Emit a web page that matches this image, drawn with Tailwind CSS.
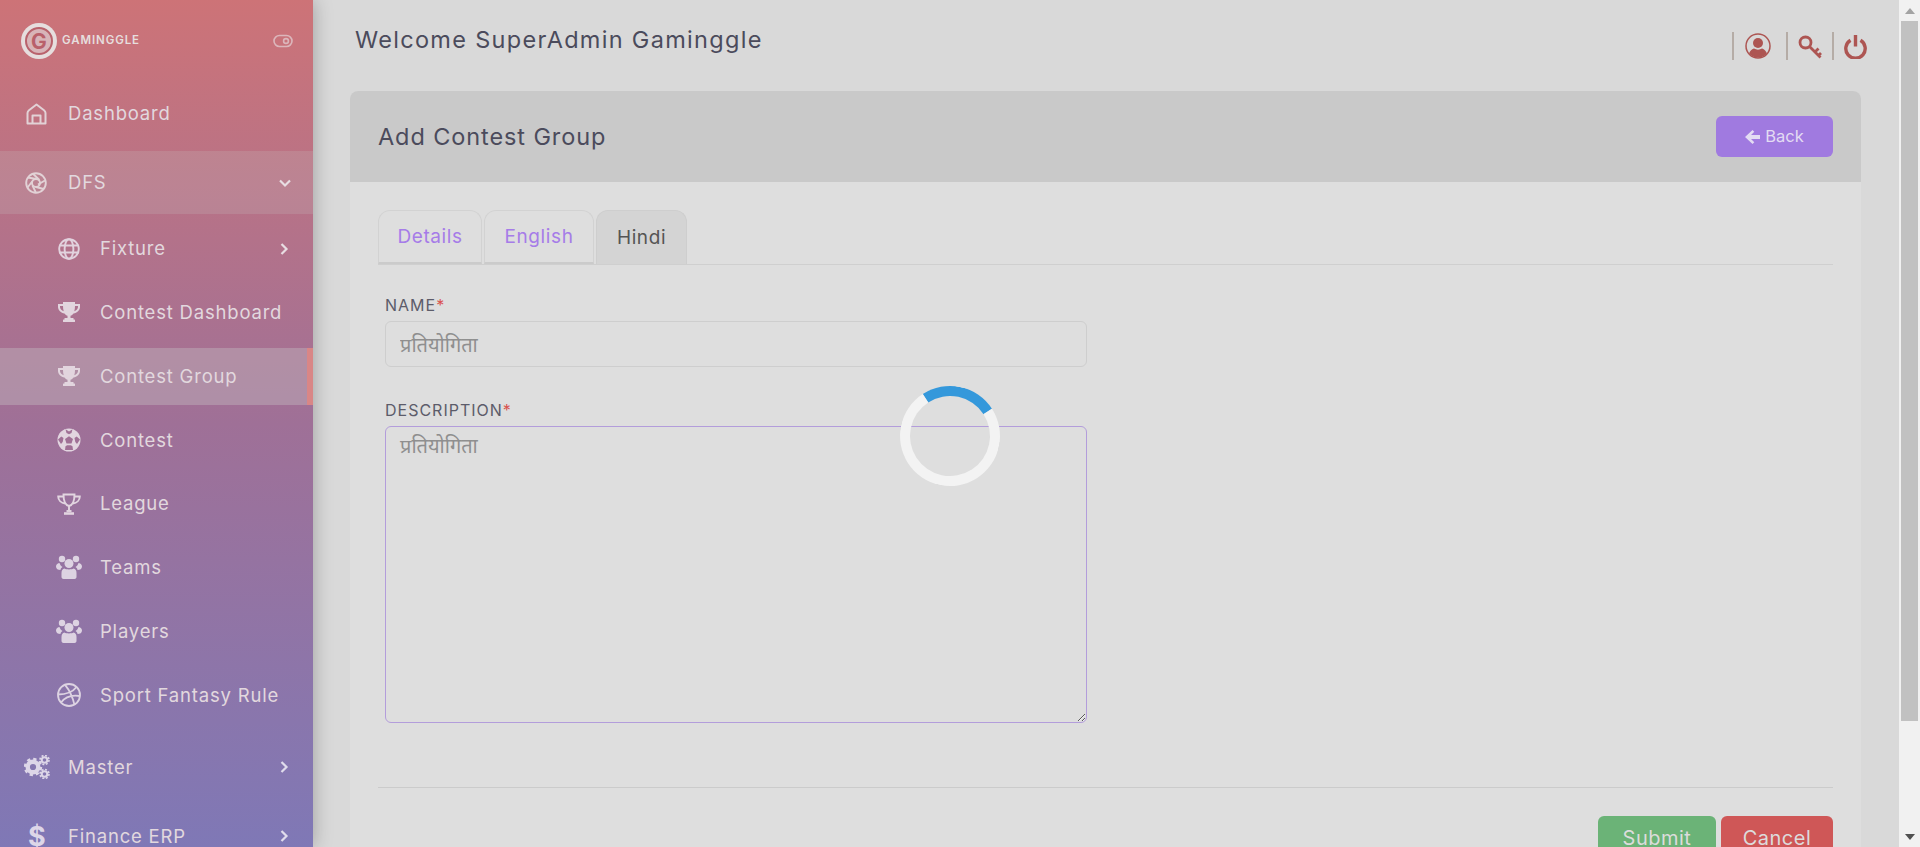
<!DOCTYPE html>
<html lang="en">
<head>
<meta charset="utf-8">
<title>Add Contest Group</title>
<script src="https://cdn.jsdelivr.net/npm/@tailwindcss/browser@4"></script>
</head>
<body class="h-screen overflow-hidden flex bg-[#d9d9d9] font-['Inter','Noto_Sans',sans-serif] relative">

<aside class="w-[313px] h-[847px] shrink-0 overflow-hidden relative z-10 shadow-[0_0_18px_rgba(0,0,0,0.28)] bg-gradient-to-b from-[#cd7377] via-[#9f7097] to-[#7f78b6] text-[#e2d8de] text-[18.5px] tracking-[0.8px] [&_a>span:nth-child(2)]:pt-[1px]">
  <div class="h-[82px] flex items-center pl-[21px] pr-[20px] justify-between">
    <div class="flex items-center">
      <div class="relative w-[36px] h-[36px] rounded-full bg-[#e6dede] flex items-center justify-center">
        <div class="w-[28px] h-[28px] rounded-full border-2 border-[#b9626c] bg-[#d8b4b8] flex items-center justify-center text-[#b9606a] text-[21px] font-bold leading-none tracking-normal">G</div>
      </div>
      <span class="ml-[5px] text-[11.5px] font-semibold tracking-[0.9px] text-[#e6dede] leading-none">GAMINGGLE</span>
    </div>
    <svg width="20" height="14" viewBox="0 0 20 14" fill="none" stroke="#dcb6bb" stroke-width="1.6"><rect x="1" y="1.5" width="18" height="11" rx="5.5"/><circle cx="13" cy="7" r="2.4"/></svg>
  </div>

  <div class="flex flex-col gap-[6px]">
    <a class="h-[63px] flex items-center">
      <span class="w-[68px] pl-[26px] shrink-0"><svg width="21" height="22" viewBox="0 0 21 22" fill="none" stroke="#e2d2d6" stroke-width="2" stroke-linejoin="round"><path d="M1.500 10C1.500 8.500 2 8 3 7.200L10.500 1.500 18 7.200C19 8 19.500 8.500 19.500 10V20.500H1.500z"/><path d="M6.500 20.500V12.500h8v8"/></svg></span>
      <span>Dashboard</span>
    </a>
    <a class="h-[63px] flex items-center bg-[#c8c8c8]/20">
      <span class="w-[68px] pl-[25px] shrink-0"><svg width="22" height="22" viewBox="0 0 22 22" fill="none" stroke="#e2d2d6" stroke-width="1.9"><circle cx="11" cy="11" r="9.8"/><circle cx="11" cy="11" r="4"/><path d="M8 1.700 14.400 8M20 8.500 13 12.500M18.500 17 11 15M11 20.800 7.500 13.500M2.500 15.500 7.200 9.500M3 5.500 11 7"/></svg></span>
      <span>DFS</span>
      <svg class="ml-auto mr-[21px]" width="14" height="10" viewBox="0 0 14 10" fill="none" stroke="#e8dde2" stroke-width="2.2"><path d="M2 2.500 7 7.500l5-5"/></svg>
    </a>
  </div>

  <div class="mt-[6px] flex flex-col gap-[6.8px]">
    <a class="h-[57px] flex items-center">
      <span class="w-[100px] pl-[58px] shrink-0"><svg width="22" height="22" viewBox="0 0 22 22" fill="none" stroke="#e2d2de" stroke-width="1.9"><circle cx="11" cy="11" r="9.8"/><ellipse cx="11" cy="11" rx="4.4" ry="9.8"/><path d="M1.500 7.500h19M1.500 14.500h19"/></svg></span>
      <span>Fixture</span>
      <svg class="ml-auto mr-[24px]" width="10" height="14" viewBox="0 0 10 14" fill="none" stroke="#e8dde2" stroke-width="2.2"><path d="M2.500 2 7.500 7l-5 5"/></svg>
    </a>
    <a class="h-[57px] flex items-center">
      <span class="w-[100px] pl-[58px] shrink-0"><svg width="22" height="20" viewBox="0 0 22 20" fill="#e2d5de"><path d="M5 0h12v2h5v3c0 3-3 6-6.500 6.500-.8 1.300-2 2-3 2.300V16h3v2H6.500v-2h3v-2.200c-1-.3-2.200-1-3-2.300C3 11 0 8 0 5V2h5zM2 4v1c0 1.700 1.500 3.500 3.700 4.200C5.200 7.600 5 6 5 4zm18 0h-3c0 2-.2 3.600-.7 5.200C18.500 8.500 20 6.700 20 5z"/><rect x="5" y="17.500" width="12" height="2.500" rx=".5"/></svg></span>
      <span>Contest Dashboard</span>
    </a>
    <a class="h-[57px] flex items-center bg-[#c8c8c8]/35 border-r-[6px] border-[#d98686]">
      <span class="w-[100px] pl-[58px] shrink-0"><svg width="22" height="20" viewBox="0 0 22 20" fill="#e2d5de"><path d="M5 0h12v2h5v3c0 3-3 6-6.500 6.500-.8 1.300-2 2-3 2.300V16h3v2H6.500v-2h3v-2.200c-1-.3-2.200-1-3-2.300C3 11 0 8 0 5V2h5zM2 4v1c0 1.700 1.500 3.500 3.700 4.200C5.200 7.600 5 6 5 4zm18 0h-3c0 2-.2 3.600-.7 5.200C18.500 8.500 20 6.700 20 5z"/><rect x="5" y="17.500" width="12" height="2.500" rx=".5"/></svg></span>
      <span>Contest Group</span>
    </a>
    <a class="h-[57px] flex items-center">
      <span class="w-[100px] pl-[57px] shrink-0"><svg width="24" height="24" viewBox="0 0 24 24"><circle cx="12" cy="12" r="11.500" fill="#e2d5e0"/><path d="M12 8.200 16 11l-1.500 4.500h-5L8 11zM8.500 1.200 12 3.600l3.500-2.400L14.500 5 12 6.200 9.500 5zM1 11.500l3.300-3 2.200 1.500-.8 4-1.700 2zM23 11.500l-3.300-3-2.200 1.500.8 4 1.700 2zM8 22l.5-3.800 1.700-1h3.600l1.700 1L16 22z" fill="#a07096"/></svg></span>
      <span>Contest</span>
    </a>
    <a class="h-[57px] flex items-center">
      <span class="w-[100px] pl-[57px] shrink-0"><svg width="24" height="22" viewBox="0 0 24 22" fill="none" stroke="#e2d5e0" stroke-width="1.9"><path d="M6.500 1.500h11c0 6-1 10.500-5.500 11.500-4.500-1-5.500-5.500-5.500-11.500z"/><path d="M6.500 3.500H1.200c0 3.500 2.800 6.500 7 7M17.500 3.500h5.300c0 3.500-2.800 6.500-7 7M12 13v4.500"/><path d="M7 20.500h10" stroke-width="2.600"/><path d="M9.500 18h5"/></svg></span>
      <span>League</span>
    </a>
    <a class="h-[57px] flex items-center">
      <span class="w-[100px] pl-[56px] shrink-0"><svg width="26" height="24" viewBox="0 0 26 24" fill="#ddd3e2"><circle cx="6" cy="4" r="3.200"/><circle cx="20" cy="4" r="3.200"/><circle cx="13" cy="8.500" r="4.500"/><path d="M0 11.500C0 9 2 8.300 3.500 8c.6 2 1.600 3 3 4C5 12.800 4.500 14 4.500 15 2 15 0 14 0 11.500zM26 11.500C26 9 24 8.300 22.500 8c-.6 2-1.600 3-3 4 1.500.8 2 2 2 3 2.500 0 4.500-1 4.500-3.500z"/><path d="M8.500 13.500C10 14.700 16 14.700 17.500 13.500c2 .5 3 2 3 4.500v4c0 1-1 2-2 2h-11c-1 0-2-1-2-2v-4c0-2.500 1-4 3-4.500z"/></svg></span>
      <span>Teams</span>
    </a>
    <a class="h-[57px] flex items-center">
      <span class="w-[100px] pl-[56px] shrink-0"><svg width="26" height="24" viewBox="0 0 26 24" fill="#ddd3e2"><circle cx="6" cy="4" r="3.200"/><circle cx="20" cy="4" r="3.200"/><circle cx="13" cy="8.500" r="4.500"/><path d="M0 11.500C0 9 2 8.300 3.500 8c.6 2 1.600 3 3 4C5 12.800 4.500 14 4.500 15 2 15 0 14 0 11.500zM26 11.500C26 9 24 8.300 22.500 8c-.6 2-1.600 3-3 4 1.500.8 2 2 2 3 2.500 0 4.500-1 4.500-3.500z"/><path d="M8.500 13.500C10 14.700 16 14.700 17.500 13.500c2 .5 3 2 3 4.500v4c0 1-1 2-2 2h-11c-1 0-2-1-2-2v-4c0-2.500 1-4 3-4.500z"/></svg></span>
      <span>Players</span>
    </a>
    <a class="h-[57px] flex items-center">
      <span class="w-[100px] pl-[57px] shrink-0"><svg width="24" height="24" viewBox="0 0 24 24" fill="none" stroke="#ddd3e2" stroke-width="1.800"><circle cx="12" cy="12" r="11"/><path d="M8 1.800C12 6.500 15.500 13 17.500 22M1 11.500C8 11.500 15 10 19.500 4M4 19.500C8 14 14 11.500 23 13"/></svg></span>
      <span>Sport Fantasy Rule</span>
    </a>
  </div>

  <div class="mt-[12px] flex flex-col gap-[6px]">
    <a class="h-[63px] flex items-center">
      <span class="w-[68px] pl-[24px] shrink-0"><svg width="26" height="24" viewBox="0 0 26 24" fill="none" stroke="#ddd6e8"><circle cx="9" cy="12" r="5.300" stroke-width="4.400"/><circle cx="9" cy="12" r="8" stroke-width="2.400" stroke-dasharray="3.300 2.980"/><circle cx="20.500" cy="5" r="2.800" stroke-width="2"/><circle cx="20.500" cy="5" r="4.500" stroke-width="1.600" stroke-dasharray="2 1.530"/><circle cx="20.500" cy="19" r="2.800" stroke-width="2"/><circle cx="20.500" cy="19" r="4.500" stroke-width="1.600" stroke-dasharray="2 1.530"/></svg></span>
      <span>Master</span>
      <svg class="ml-auto mr-[24px]" width="10" height="14" viewBox="0 0 10 14" fill="none" stroke="#e0dcec" stroke-width="2.200"><path d="M2.500 2 7.500 7l-5 5"/></svg>
    </a>
    <a class="h-[63px] flex items-center">
      <span class="w-[68px] pl-[28px] shrink-0 text-[27px] font-bold leading-none tracking-normal text-[#ddd6e8]">$</span>
      <span>Finance ERP</span>
      <svg class="ml-auto mr-[24px]" width="10" height="14" viewBox="0 0 10 14" fill="none" stroke="#e0dcec" stroke-width="2.200"><path d="M2.500 2 7.500 7l-5 5"/></svg>
    </a>
  </div>
</aside>

<main class="flex-1 min-w-0 h-[847px] overflow-hidden">
  <header class="h-[91px] flex pl-[42px] pr-[32px] relative">
    <h1 class="mt-[25px] text-[23.5px] leading-[30px] text-[#4b4b5c] tracking-[1.3px]">Welcome SuperAdmin Gaminggle</h1>
    <div class="ml-auto flex items-start pt-[32px]">
      <span class="w-[2px] h-[28px] bg-[#b5aca6]"></span>
      <svg class="ml-[11px] mt-[1px]" width="26" height="26" viewBox="0 0 26 26"><defs><clipPath id="c"><circle cx="13" cy="13" r="11.500"/></clipPath></defs><circle cx="13" cy="13" r="12" fill="none" stroke="#ad5552" stroke-width="1.500"/><g clip-path="url(#c)" fill="#ad5552"><circle cx="13" cy="10" r="5"/><path d="M3 26c0-7 4-10 6-10.500 2.500 1.500 5.500 1.500 8 0 2 .5 6 3.500 6 10.500z"/></g></svg>
      <span class="ml-[15px] w-[2px] h-[28px] bg-[#b5aca6]"></span>
      <svg class="ml-[10px] mt-[3px]" width="24" height="25" viewBox="0 0 24 25" fill="none" stroke="#ad5552" stroke-width="2.800"><circle cx="7.500" cy="7.500" r="5.500"/><path d="M11.500 11.500 22.500 22.500M17 17l3.500-3.500M20.500 20.500 23 18"/></svg>
      <span class="ml-[10px] w-[2px] h-[28px] bg-[#b5aca6]"></span>
      <svg class="ml-[10px] mt-[2px]" width="23" height="25" viewBox="0 0 23 25" fill="none" stroke="#ad5552" stroke-width="3.400"><path d="M6.500 6.200A9.700 9.700 0 1 0 16.500 6.200"/><path d="M11.500 1V12.500"/></svg>
    </div>
  </header>

  <section class="ml-[37px] mr-[38px] rounded-t-[8px] bg-[#dedede] overflow-hidden">
    <div class="h-[91px] bg-[#c9c9c9] flex items-center justify-between pl-[28px] pr-[28px]">
      <h2 class="text-[23.5px] text-[#4b4b5c] tracking-[0.9px]">Add Contest Group</h2>
      <button class="w-[117px] h-[41px] rounded-[6px] bg-[#a07ae0] text-[#e3dcf3] text-[16.5px] flex items-center justify-center gap-[5px]">
        <svg width="15" height="14" viewBox="0 0 15 14" fill="#e3dcf3"><path d="M7.500 0l1.800 1.800L6 5h9v4H6l3.300 3.200L7.500 14 0 7z"/></svg>
        Back
      </button>
    </div>

    <div class="px-[28px] pt-[28px]">
      <div class="flex gap-[2px] h-[55px] border-b border-[#cfcfcf] text-[19px] tracking-[0.6px]">
        <button class="w-[104px] h-[54px] pt-[2px] rounded-t-[12px] border border-[#d2d2d2] border-b-2 border-b-[#cbcbcb] text-[#a67ce8]">Details</button>
        <button class="w-[110px] h-[54px] pt-[2px] rounded-t-[12px] border border-[#d2d2d2] border-b-2 border-b-[#cbcbcb] text-[#a67ce8]">English</button>
        <button class="w-[91px] h-[54px] pt-[1px] rounded-t-[12px] border border-[#cecece] border-b-0 bg-[#d4d4d4] text-[#555555]">Hindi</button>
      </div>

      <form class="pl-[7px] pt-[30px]">
        <label class="block h-[20px] text-[16px] leading-[20px] text-[#5c5c6a] tracking-[1px]">NAME<span class="text-[#d9534f]">*</span></label>
        <input class="block mt-[6px] w-[702px] h-[46px] rounded-[6px] border border-[#cecece] bg-transparent px-[14px] text-[20px] text-[#8f8f8f] outline-none" value="प्रतियोगिता">
        <label class="block mt-[33px] h-[20px] text-[16px] leading-[20px] text-[#5c5c6a] tracking-[1px]">DESCRIPTION<span class="text-[#d9534f]">*</span></label>
        <textarea class="block mt-[6px] w-[702px] h-[297px] rounded-[6px] border border-[#b39ddb] bg-transparent px-[14px] py-[4px] text-[20px] text-[#8f8f8f] outline-none">प्रतियोगिता</textarea>
      </form>

      <div class="mt-[64px] border-t border-[#cbcbcb]"></div>
      <div class="mt-[28px] flex justify-end gap-[5px] text-[20px] tracking-[0.5px]">
        <button class="w-[118px] h-[46px] pb-[2px] rounded-[6px] bg-[#6bb377] text-[#dcdcdc]">Submit</button>
        <button class="w-[112px] h-[46px] pb-[2px] rounded-[6px] bg-[#cf5757] text-[#dcdcdc]">Cancel</button>
      </div>
    </div>
  </section>
</main>

<div class="w-[21px] h-[847px] shrink-0 bg-[#f1f1f1] flex flex-col items-center z-10">
  <div class="h-[21px] flex items-center justify-center"><svg width="10" height="6" viewBox="0 0 10 6"><path d="M0 6 5 0l5 6z" fill="#a3a3a3"/></svg></div>
  <div class="w-[17px] h-[700px] bg-[#c1c1c1]"></div>
  <div class="mt-auto h-[21px] flex items-center justify-center"><svg width="10" height="6" viewBox="0 0 10 6"><path d="M0 0h10L5 6z" fill="#505050"/></svg></div>
</div>

<div class="absolute left-[900px] top-[386px] w-[100px] h-[100px] rounded-full border-[10px] border-[#f3f3f3] border-t-[#3498db] rotate-[12deg] z-20"></div>
</body>
</html>
